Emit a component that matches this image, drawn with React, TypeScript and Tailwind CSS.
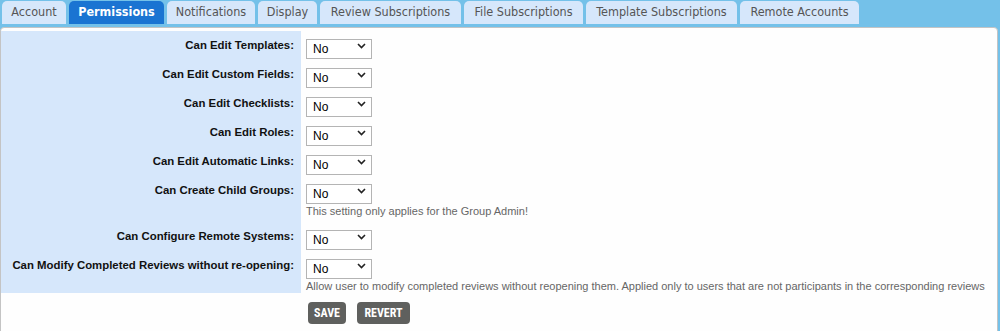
import { ChangeEvent, useState } from "react";

const tabs = [
  { name: "Account", w: "w-[64px]" },
  { name: "Permissions", w: "w-[95px]" },
  { name: "Notifications", w: "w-[88px]" },
  { name: "Display", w: "w-[59px]" },
  { name: "Review Subscriptions", w: "w-[141px]" },
  { name: "File Subscriptions", w: "w-[119px]" },
  { name: "Template Subscriptions", w: "w-[151px]" },
  { name: "Remote Accounts", w: "w-[119px]" },
];

type Row = { label: string; note?: string };

const rows: Row[] = [
  { label: "Can Edit Templates:" },
  { label: "Can Edit Custom Fields:" },
  { label: "Can Edit Checklists:" },
  { label: "Can Edit Roles:" },
  { label: "Can Edit Automatic Links:" },
  {
    label: "Can Create Child Groups:",
    note: "This setting only applies for the Group Admin!",
  },
  { label: "Can Configure Remote Systems:" },
  {
    label: "Can Modify Completed Reviews without re-opening:",
    note: "Allow user to modify completed reviews without reopening them. Applied only to users that are not participants in the corresponding reviews",
  },
];

function YesNo() {
  const [value, setValue] = useState("No");
  return (
    <div className="relative w-[66px] h-[20px]">
      <select
        value={value}
        onChange={(e: ChangeEvent<HTMLSelectElement>) => setValue(e.target.value)}
        className="appearance-none w-full h-full border border-[#b4b4b4] bg-white pl-[6px] text-[12px] text-black outline-none"
        style={{ fontFamily: "'Liberation Sans', Arial, sans-serif" }}
      >
        <option>No</option>
        <option>Yes</option>
      </select>
      <svg
        className="absolute right-[6px] top-[7px] pointer-events-none"
        width="9"
        height="6"
        viewBox="0 0 9 6"
      >
        <path d="M1 1 L4.5 4.5 L8 1" fill="none" stroke="#222" strokeWidth="1.6" />
      </svg>
    </div>
  );
}

export default function App() {
  const active = "Permissions";

  return (
    <div
      className="w-[1000px] h-[331px] bg-[#74c1e9] overflow-hidden"
      style={{ fontFamily: "'Liberation Sans', Arial, sans-serif" }}
    >
      {/* tabs */}
      <div className="flex gap-[3px] pl-[2px] pt-[1px] h-[27px]">
        {tabs.map((t) => (
          <div
            key={t.name}
            className={`${t.w} h-[23px] rounded-t-[5px] flex items-center justify-center text-[12.5px] ${
              t.name === active
                ? "bg-[#1a74d2] text-white font-bold"
                : "bg-[#d6e7fb] text-[#555]"
            }`}
            style={{ fontFamily: "'DejaVu Sans Condensed', 'DejaVu Sans', Verdana, sans-serif" }}
          >
            {t.name}
          </div>
        ))}
      </div>

      {/* panel */}
      <div className="mr-[2px] h-[320px] bg-[#fefefe] border border-[#c4c4c4] rounded-t-[4px]">
        <div className="pt-[3px]">
          {rows.map((r) => (
            <div key={r.label}>
              <div className="flex h-[29px]">
                <div className="w-[300px] shrink-0 bg-[#d6e7fb] flex items-center justify-end pr-[7px] text-[11.4px] font-bold text-[#111] whitespace-nowrap">
                  {r.label}
                </div>
                <div className="flex items-center pl-[5px]">
                  <YesNo />
                </div>
              </div>
              {r.note && (
                <div className="flex">
                  <div
                    className={`w-[300px] shrink-0 bg-[#d6e7fb] ${
                      r.label.startsWith("Can Create") ? "h-[17px]" : "h-[13px]"
                    }`}
                  />
                  <div className="pl-[5px] text-[11px] leading-[13px] text-[#666] whitespace-nowrap">
                    {r.note}
                  </div>
                </div>
              )}
            </div>
          ))}
        </div>

        <div className="flex gap-[11px] pl-[307px] pt-[9px]">
          <button
            className="w-[38px] h-[22px] rounded-[4px] bg-[#5f605e] text-white text-[12px] font-bold"
            style={{ fontFamily: "'Liberation Sans Narrow', 'Roboto Condensed', Arial, sans-serif" }}
          >
            SAVE
          </button>
          <button
            className="w-[53px] h-[22px] rounded-[4px] bg-[#5f605e] text-white text-[12px] font-bold"
            style={{ fontFamily: "'Liberation Sans Narrow', 'Roboto Condensed', Arial, sans-serif" }}
          >
            REVERT
          </button>
        </div>
      </div>
    </div>
  );
}
